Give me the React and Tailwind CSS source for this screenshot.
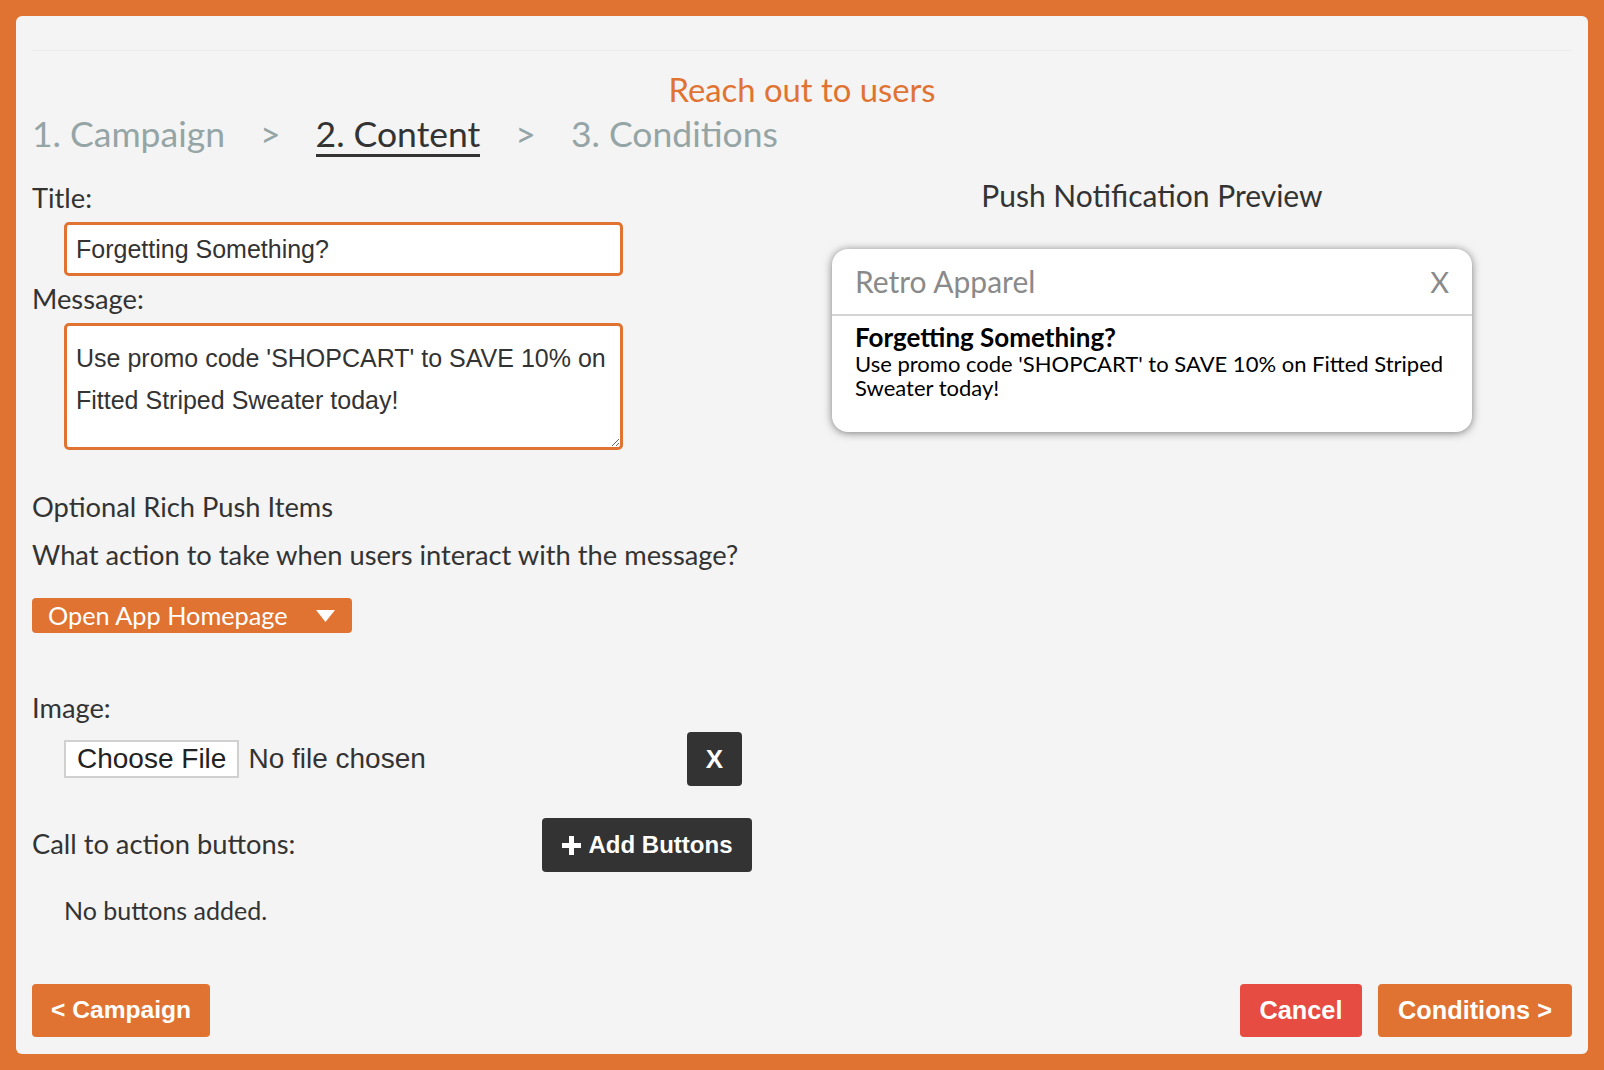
import React from 'react';

const lato = { fontFamily: 'Lato, "Open Sans", sans-serif' };
const helv = { fontFamily: '"Liberation Sans", Arial, sans-serif' };

const Steps = () => (
  <div className="flex items-start gap-[35px] mt-[4px] h-[44px] text-[35.5px] leading-[41px]" style={lato}>
    <span className="text-[#95a5a6]">1. Campaign</span>
    <span className="text-[#95a5a6]">&gt;</span>
    <span className="text-[#333333] border-b-[3px] border-[#333333]">2. Content</span>
    <span className="text-[#95a5a6]">&gt;</span>
    <span className="text-[#95a5a6]">3. Conditions</span>
  </div>
);

const PushPreview = () => (
  <div className="w-[700px] flex flex-col items-center" style={lato}>
    <h3 className="mt-[24px] text-[30px] leading-[34px] text-[#333333]">Push Notification Preview</h3>
    <div className="mt-[37px] w-[640px] h-[183px] bg-white rounded-[16px] shadow-[0_1px_9px_rgba(0,0,0,0.5)] overflow-hidden">
      <div className="h-[67px] px-[23px] flex items-center justify-between border-b-2 border-[#d4d4d4]">
        <span className="text-[30px] text-[#8a8a8a]">Retro Apparel</span>
        <span className="text-[29px] text-[#8a8a8a]">X</span>
      </div>
      <div className="px-[23px] pt-[6px]">
        <div className="text-[26px] leading-[30px] font-bold text-black">Forgetting Something?</div>
        <p className="text-[22px] leading-[24px] text-black">
          Use promo code 'SHOPCART' to SAVE 10% on Fitted Striped Sweater today!
        </p>
      </div>
    </div>
  </div>
);

const ContentForm = () => (
  <div className="w-[770px] flex flex-col text-[#333333]" style={lato}>
    <label className="mt-[27px] text-[27.3px] leading-[34px]">Title:</label>
    <input
      readOnly
      value="Forgetting Something?"
      className="mt-[7px] ml-[32px] w-[559px] h-[54px] bg-white border-[3px] border-[#e07331] rounded-[5px] px-[9px] text-[25px] text-[#333333] outline-none"
      style={helv}
    />
    <label className="mt-[6px] text-[27.3px] leading-[34px]">Message:</label>
    <textarea
      readOnly
      value="Use promo code 'SHOPCART' to SAVE 10% on Fitted Striped Sweater today!"
      className="mt-[7px] ml-[32px] w-[559px] h-[127px] bg-white border-[3px] border-[#e07331] rounded-[5px] px-[9px] pt-[11px] text-[25px] leading-[42px] text-[#333333] outline-none resize"
      style={helv}
    />

    <div className="mt-[40px] text-[27.3px] leading-[34px]">Optional Rich Push Items</div>
    <div className="mt-[14px] text-[27.3px] leading-[34px]">What action to take when users interact with the message?</div>

    <button className="mt-[26px] w-[320px] h-[35px] bg-[#e07331] rounded-[4px] flex items-center pl-[16px] pr-[16px] text-white text-[25.3px]" style={lato}>
      <span>Open App Homepage</span>
      <svg className="ml-auto mr-[1px]" width="19" height="12" viewBox="0 0 19 12">
        <path d="M0 0 L19 0 L9.5 12 Z" fill="#ffffff" />
      </svg>
    </button>

    <label className="mt-[58px] text-[27.3px] leading-[34px]">Image:</label>
    <div className="mt-[7px] h-[54px] flex items-center">
      <div className="ml-[32px] flex items-center text-[28px] text-[#222222]" style={helv}>
        <span className="h-[38px] px-[11px] bg-white border-2 border-[#d0d0d0] flex items-center">Choose File</span>
        <span className="ml-[9px] text-[#333333]">No file chosen</span>
      </div>
      <button className="ml-auto mr-[60px] w-[55px] h-[54px] bg-[#333333] rounded-[4px] text-white text-[26px] font-bold" style={helv}>
        X
      </button>
    </div>

    <div className="mt-[32px] h-[54px] flex items-center">
      <span className="text-[27.3px] leading-[34px] -mt-[3px]">Call to action buttons:</span>
      <button className="ml-auto mr-[50px] w-[210px] h-[54px] bg-[#333333] rounded-[4px] flex items-center justify-center gap-[8px] text-white text-[24px] font-bold" style={helv}>
        <svg width="19" height="19" viewBox="0 0 19 19">
          <path d="M7 0 H12 V7 H19 V12 H12 V19 H7 V12 H0 V7 H7 Z" fill="#ffffff" />
        </svg>
        <span>Add Buttons</span>
      </button>
    </div>

    <div className="mt-[23px] ml-[32px] text-[25px] leading-[30px]">No buttons added.</div>
  </div>
);

export default function App() {
  return (
    <div className="w-full h-[1070px] bg-[#e07331] p-[16px]">
      <div className="h-[1038px] bg-[#f4f4f4] rounded-[6px] px-[16px] pb-[17px] flex flex-col">
        <div className="h-[35px] border-b border-[#ebebeb]" />
        <h2 className="mt-[20px] text-center text-[32.8px] leading-[38px] text-[#e07331]" style={lato}>
          Reach out to users
        </h2>
        <Steps />
        <div className="flex -mt-[3px]">
          <ContentForm />
          <PushPreview />
        </div>
        <div className="mt-auto flex items-center" style={helv}>
          <button className="h-[53px] px-[19px] bg-[#e07331] rounded-[4px] text-white text-[24.6px] font-bold">
            &lt; Campaign
          </button>
          <button className="ml-auto h-[53px] w-[122px] bg-[#e74c42] rounded-[4px] text-white text-[25.3px] font-bold">
            Cancel
          </button>
          <button className="ml-[16px] h-[53px] w-[194px] bg-[#e07331] rounded-[4px] text-white text-[25.3px] font-bold">
            Conditions &gt;
          </button>
        </div>
      </div>
    </div>
  );
}
